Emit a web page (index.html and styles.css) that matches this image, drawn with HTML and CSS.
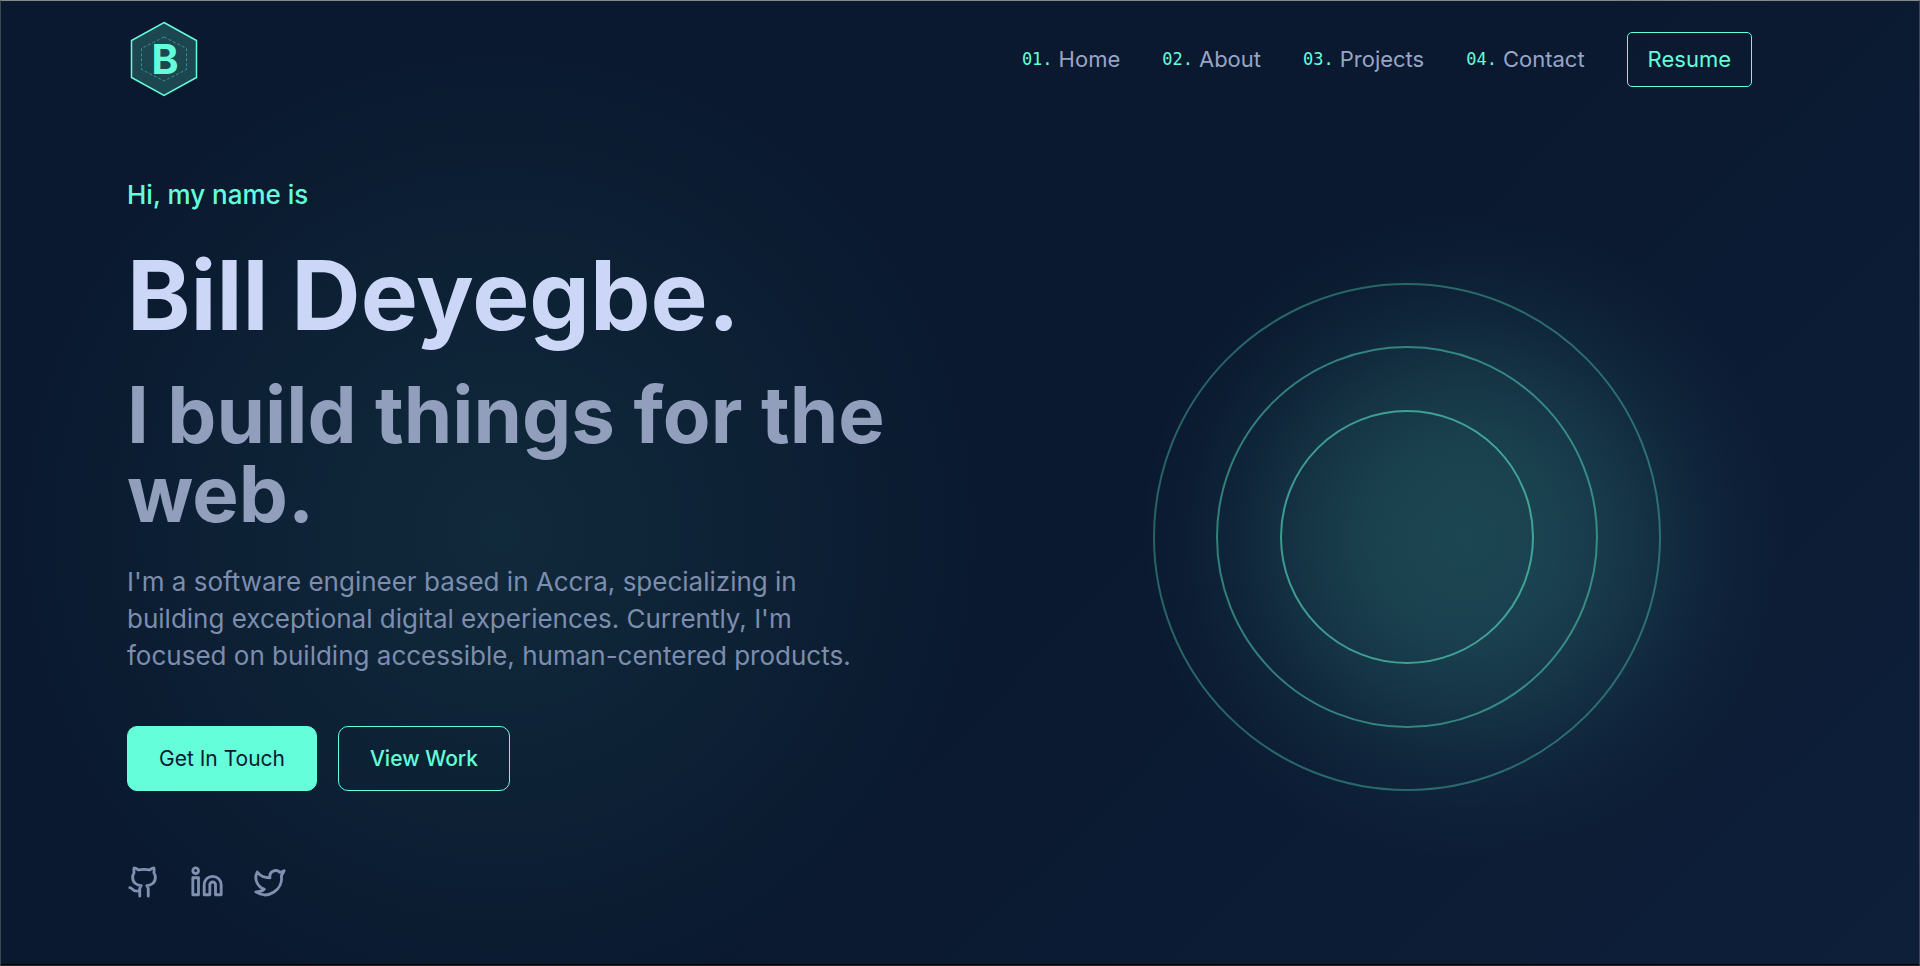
FILE: index.html
```html
<!DOCTYPE html>
<html lang="en">
<head>
<meta charset="utf-8">
<meta name="viewport" content="width=device-width, initial-scale=1">
<title>Bill Deyegbe</title>
<link rel="stylesheet" href="styles.css">
</head>
<body>
<div class="page">
  <header class="header">
    <a class="logo" href="#home" aria-label="Home">
      <svg width="74" height="76" viewBox="0 0 74 76">
        <path class="logo-hex" d="M37 1.500 69.500 19.500V56.500L37 74.500 4.500 56.500V19.500Z"/>
        <path class="logo-dash" d="M37 16 59.500 27.500V48.500L37 60 14.500 48.500V27.500Z"/>
        <text class="logo-letter" x="38" y="53" text-anchor="middle">B</text>
      </svg>
    </a>
    <nav class="nav">
      <a class="nav-link" href="#home"><span class="num">01.</span>Home</a>
      <a class="nav-link" href="#about"><span class="num">02.</span>About</a>
      <a class="nav-link" href="#projects"><span class="num">03.</span>Projects</a>
      <a class="nav-link" href="#contact"><span class="num">04.</span>Contact</a>
      <a class="resume" href="#resume">Resume</a>
    </nav>
  </header>
  <main class="hero">
    <section class="intro">
      <p class="greeting">Hi, my name is</p>
      <h1 class="name">Bill Deyegbe.</h1>
      <h2 class="tagline">I build things for the web.</h2>
      <p class="about">I'm a software engineer based in Accra, specializing in<br>building exceptional digital experiences. Currently, I'm<br>focused on building accessible, human-centered products.</p>
      <div class="actions">
        <button class="btn btn-solid" type="button">Get In Touch</button>
        <button class="btn btn-line" type="button">View Work</button>
      </div>
      <div class="social">
        <a href="#github" aria-label="GitHub"><svg class="icon" viewBox="0 0 24 24"><path d="M15 22v-4a4.800 4.800 0 0 0-1-3.500c3 0 6-2 6-5.500.08-1.250-.27-2.480-1-3.500.28-1.150.28-2.350 0-3.500 0 0-1 0-3 1.500-2.640-.5-5.360-.5-8 0C6 2 5 2 5 2c-.3 1.150-.3 2.350 0 3.500A5.403 5.403 0 0 0 4 9c0 3.500 3 5.500 6 5.500-.39.490-.68 1.050-.85 1.650-.17.600-.22 1.230-.15 1.850v4"/><path d="M9 18c-4.510 2-5-2-7-2"/></svg></a>
        <a href="#linkedin" aria-label="LinkedIn"><svg class="icon" viewBox="0 0 24 24"><path d="M16 8a6 6 0 0 1 6 6v7h-4v-7a2 2 0 0 0-4 0v7h-4v-7a6 6 0 0 1 6-6z"/><rect x="2" y="9" width="4" height="12"/><circle cx="4" cy="4" r="2"/></svg></a>
        <a href="#twitter" aria-label="Twitter"><svg class="icon" viewBox="0 0 24 24"><path d="M22 4s-.7 2.100-2 3.400c1.600 10-9.400 17.300-18 11.600 2.200.1 4.400-.6 6-2C3 15.500.5 9.600 3 5c2.200 2.600 5.600 4.100 9 4-.9-4.200 4-6.600 7-3.800 1.100 0 3-1.200 3-1.200z"/></svg></a>
      </div>
    </section>
    <div class="art">
      <svg class="rings" viewBox="0 0 510 510" aria-hidden="true">
        <defs>
          <radialGradient id="glow">
            <stop offset="0" stop-color="#64ffda" stop-opacity=".19"/>
            <stop offset=".3" stop-color="#64ffda" stop-opacity=".165"/>
            <stop offset=".5" stop-color="#64ffda" stop-opacity=".115"/>
            <stop offset=".7" stop-color="#64ffda" stop-opacity=".05"/>
            <stop offset=".85" stop-color="#64ffda" stop-opacity=".018"/>
            <stop offset="1" stop-color="#64ffda" stop-opacity="0"/>
          </radialGradient>
        </defs>
        <circle cx="312" cy="255" r="325" fill="url(#glow)"/>
        <circle class="ring" cx="255" cy="255" r="253" opacity=".32"/>
        <circle class="ring" cx="255" cy="255" r="190" opacity=".42"/>
        <circle class="ring" cx="255" cy="255" r="126" opacity=".52"/>
      </svg>
    </div>
  </main>
</div>
</body>
</html>
```
FILE: styles.css
```css
* { box-sizing: border-box; }

body {
  margin: 0;
  background: #0a192f;
  color: #8892b0;
  font-family: Inter, "Open Sans", sans-serif;
}

.page {
  min-height: 100vh;
  padding: 20px 167px 64px 126px;
  border: 1px solid #3d4857;
  border-top-color: #85898c;
  border-bottom-color: #25282b;
  box-shadow: inset 0 -1px #000;
  overflow: hidden;
  background:
    radial-gradient(circle at 26% 55%, rgba(100, 255, 218, .07), rgba(100, 255, 218, .035) 260px, transparent 490px),
    linear-gradient(135deg, #0a192f 55%, #0e1f3a);
}

a { color: inherit; text-decoration: none; }

.header {
  display: flex;
  align-items: center;
  justify-content: space-between;
}

.logo { display: flex; }
.logo-hex { fill: #1c4650; stroke: #64ffda; stroke-width: 1.5; }
.logo-dash { fill: none; stroke: #64ffda; stroke-width: 1; stroke-dasharray: 3 2; opacity: .4; }
.logo-letter { fill: #64ffda; font-size: 41px; font-weight: 700; }

.nav {
  display: flex;
  align-items: center;
  gap: 42px;
  font-size: 22px;
}

.nav-link { display: flex; align-items: center; gap: 6px; }
.nav-link { color: #99a5c4; }
.num { color: #64ffda; font-family: "DejaVu Sans Mono", monospace; font-size: 17px; }

.resume {
  padding: 0 20px;
  border: 1px solid #64ffda;
  border-radius: 5px;
  color: #64ffda;
  line-height: 53px;
}

.hero {
  display: grid;
  grid-template-columns: minmax(0, 5fr) minmax(0, 4fr);
  gap: 72px;
  align-items: center;
  margin-top: 78px;
}

.greeting, .name, .tagline, .about { margin: 0; }

.greeting {
  color: #64ffda;
  font-size: 26px;
  font-weight: 500;
  line-height: 40px;
}

.name {
  margin-top: 30px;
  color: #ccd6f6;
  font-size: 96px;
  font-weight: 700;
  line-height: 100px;
}

.tagline {
  margin-top: 30px;
  color: #919fbd;
  font-size: 78px;
  font-weight: 700;
  line-height: 79px;
}

.about {
  margin-top: 30px;
  color: #7d8dad;
  font-size: 26px;
  line-height: 37px;
}

.actions { display: flex; gap: 21px; margin-top: 52px; }

.btn {
  padding: 0 31px;
  border: 1px solid #64ffda;
  border-radius: 10px;
  font: inherit;
  font-size: 21px;
  line-height: 63px;
}

.btn-solid { background: #64ffda; color: #0a192f; }
.btn-line { background: transparent; color: #64ffda; font-weight: 500; }

.social { display: flex; gap: 29px; margin-top: 74px; }
.social a { display: flex; }

.icon {
  width: 34px;
  height: 34px;
  fill: none;
  stroke: #8090b0;
  stroke-width: 2;
  stroke-linecap: round;
  stroke-linejoin: round;
}

.art { display: flex; justify-content: center; }
.rings { width: 100%; max-width: 510px; overflow: visible; }
.ring { fill: none; stroke: #64ffda; stroke-width: 2; }
```
